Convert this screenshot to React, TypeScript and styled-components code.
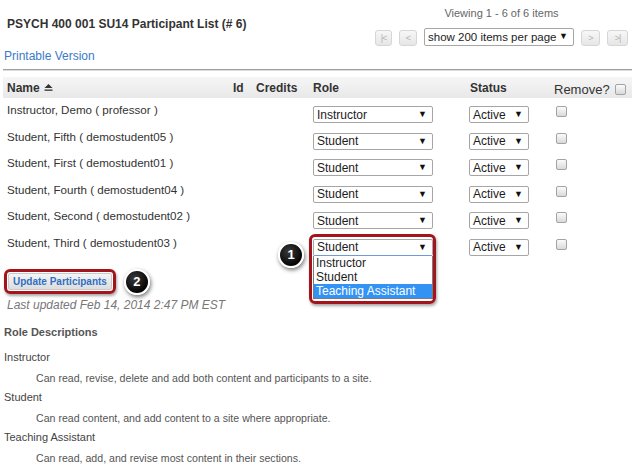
import styled, { createGlobalStyle } from "styled-components";

const GlobalStyle = createGlobalStyle`
  html, body {
    margin: 0;
    padding: 0;
    background: #fff;
  }
  body {
    font-family: "Liberation Sans", Arial, sans-serif;
    color: #333;
  }
`;

const Page = styled.div`
  width: 640px;
  height: 465px;
  overflow: hidden;
  box-sizing: border-box;
  padding: 0 8px 0 3px;
`;

const TopBar = styled.div`
  display: flex;
  justify-content: space-between;
  align-items: flex-start;
  height: 69px;
`;

const TitleBlock = styled.div`
  display: flex;
  flex-direction: column;
  padding-top: 17px;
`;

const Title = styled.h1`
  margin: 0 0 0 4px;
  font-size: 12px;
  line-height: 14px;
  font-weight: bold;
  color: #333;
`;

const PrintLink = styled.a`
  margin: 18px 0 0 1px;
  font-size: 12px;
  line-height: 14px;
  color: #3a7bc8;
  text-decoration: none;
`;

const Pager = styled.div`
  display: flex;
  flex-direction: column;
  padding-top: 7px;
  margin-right: 4px;
`;

const Viewing = styled.div`
  font-size: 11px;
  line-height: 13px;
  color: #666;
  text-align: center;
`;

const PagerControls = styled.div`
  display: flex;
  align-items: center;
  gap: 7px;
  margin-top: 7px;
`;

const PagerButton = styled.span<{ $width: number }>`
  width: ${(p) => p.$width}px;
  height: 16px;
  box-sizing: border-box;
  display: flex;
  align-items: center;
  justify-content: center;
  border: 1px solid #d6d6d6;
  border-radius: 3px;
  background: linear-gradient(#f7f7f7, #e6e6e6);
  color: #b4b4b4;
  font-size: 9px;
  letter-spacing: -1px;
  margin-top: 3px;
`;

const Dropdown = styled.div<{ $width: number; $size?: number; $tall?: boolean; $focused?: boolean }>`
  width: ${(p) => p.$width}px;
  height: ${(p) => (p.$tall ? 18 : 17)}px;
  box-sizing: border-box;
  display: flex;
  align-items: center;
  justify-content: space-between;
  padding: 0 5px 0 3px;
  border: 1px solid #a6a6a6;
  border-bottom-color: ${(p) => (p.$focused ? "#6f9ad6" : "#a6a6a6")};
  border-radius: 2px;
  background: #fff;
  font-size: ${(p) => p.$size ?? 12}px;
  color: #1c1c1c;
  white-space: nowrap;
`;

const Arrow = styled.span`
  font-size: 9px;
  color: #111;
  margin-top: -1px;
`;

const Rule = styled.div`
  height: 1px;
  background: #9f9f9f;
  box-shadow: 0 1px 0 #dedede;
`;

const Table = styled.div`
  margin-top: 7px;
`;

const COLUMNS = "226px 23px 57px 157px 84px 1fr";

const HeaderRow = styled.div`
  display: grid;
  grid-template-columns: ${COLUMNS};
  height: 21px;
  align-items: center;
  background: linear-gradient(#f6f6f6, #e8e8e8);
  font-size: 12px;
  font-weight: bold;
  color: #333;
`;

const HeaderCell = styled.div`
  display: flex;
  align-items: center;
  gap: 4px;
  padding-left: 4px;
  white-space: nowrap;
`;

const RemoveHeader = styled(HeaderCell)`
  font-weight: normal;
  font-size: 13px;
  color: #333;
  padding-top: 3px;
  gap: 5px;
`;

const Row = styled.div`
  display: grid;
  grid-template-columns: ${COLUMNS};
  height: 26.6px;
  align-items: start;
`;

const NameCell = styled.div`
  padding: 5px 0 0 4px;
  font-size: 11.6px;
  line-height: 14px;
  color: #333;
  white-space: nowrap;
`;

const Cell = styled.div<{ $left?: number }>`
  padding: 8px 0 0 ${(p) => p.$left ?? 4}px;
`;

const Checkbox = styled.input.attrs({ type: "checkbox" })`
  appearance: none;
  width: 11px;
  height: 11px;
  margin: 0;
  box-sizing: border-box;
  border: 1px solid #a3a3a3;
  border-radius: 2px;
  background: linear-gradient(#fbfbfb, #d9d9d9);
  display: block;
`;

const OpenSelect = styled.div`
  position: relative;
  width: 120px;
`;

const Listbox = styled.ul`
  position: absolute;
  top: 100%;
  left: 0;
  width: 120px;
  box-sizing: border-box;
  margin: 0;
  padding: 0;
  list-style: none;
  border: 1px solid #7b7b7b;
  border-top: none;
  background: #fff;
  font-size: 12px;
  line-height: 14px;
  color: #1c1c1c;
  z-index: 2;
`;

const Option = styled.li<{ $active?: boolean }>`
  padding-left: 2px;
  background: ${(p) => (p.$active ? "#3393f5" : "transparent")};
  color: ${(p) => (p.$active ? "#fff" : "#1c1c1c")};
`;

const Callout = styled.span`
  position: absolute;
  top: -5px;
  left: -4px;
  right: -3px;
  height: 70px;
  box-sizing: border-box;
  border: 3px solid #a3151c;
  border-radius: 6px;
  box-shadow: 1px 2px 3px rgba(0, 0, 0, 0.35);
  pointer-events: none;
  z-index: 3;
`;

const Badge = styled.span`
  width: 26px;
  height: 26px;
  box-sizing: border-box;
  border-radius: 50%;
  border: 2px solid #fff;
  background: radial-gradient(circle at 40% 35%, #3a3a3a, #050505 70%);
  box-shadow: 1px 2px 4px rgba(0, 0, 0, 0.55);
  color: #fff;
  font-size: 13px;
  font-weight: bold;
  display: flex;
  align-items: center;
  justify-content: center;
  flex-shrink: 0;
`;

const FloatingBadge = styled(Badge)`
  position: absolute;
  left: -35px;
  top: 3px;
  z-index: 3;
`;

const UpdateRow = styled.div`
  display: flex;
  align-items: center;
  gap: 8px;
  margin: 11px 0 0 1px;
`;

const UpdateFrame = styled.div`
  display: inline-flex;
  padding: 1px;
  border: 3px solid #a3151c;
  border-radius: 6px;
  box-shadow: 1px 2px 3px rgba(0, 0, 0, 0.35);
`;

const UpdateButton = styled.button`
  height: 17px;
  padding: 0 4px;
  border: 1px solid #c9c9c9;
  border-radius: 2px;
  background: linear-gradient(#f4f4f4, #dddddd);
  font-family: "Liberation Sans", Arial, sans-serif;
  font-size: 10px;
  font-weight: bold;
  color: #2f6fc3;
`;

const LastUpdated = styled.div`
  margin: 3px 0 0 4px;
  font-size: 12px;
  line-height: 14px;
  font-style: italic;
  color: #777;
`;

const RoleHeading = styled.h2`
  margin: 13px 0 0 1px;
  font-size: 11px;
  line-height: 14px;
  font-weight: bold;
  color: #555;
`;

const Descriptions = styled.dl`
  margin: 0;
  font-size: 11px;
  line-height: 14px;
`;

const Term = styled.dt`
  margin: 5px 0 0 1px;
  color: #444;
  &:first-child {
    margin-top: 11px;
  }
`;

const Definition = styled.dd`
  margin: 7px 0 0 33px;
  font-size: 10.6px;
  color: #555;
`;

const FooterLine = styled.div`
  height: 1px;
  margin: 0 -2px 0 453px;
  background: #b8b8b8;
`;

function SortIcon() {
  return (
    <svg width="9" height="7" viewBox="0 0 9 7">
      <polygon points="4.5,0 8.5,4 0.5,4" fill="#333" />
      <rect x="0.5" y="5.5" width="8" height="1.3" fill="#333" />
    </svg>
  );
}

const participants = [
  { name: "Instructor, Demo ( professor )", role: "Instructor" },
  { name: "Student, Fifth ( demostudent05 )", role: "Student" },
  { name: "Student, First ( demostudent01 )", role: "Student" },
  { name: "Student, Fourth ( demostudent04 )", role: "Student" },
  { name: "Student, Second ( demostudent02 )", role: "Student" },
  { name: "Student, Third ( demostudent03 )", role: "Student", open: true },
];

const roles = [
  {
    title: "Instructor",
    text: "Can read, revise, delete and add both content and participants to a site.",
  },
  {
    title: "Student",
    text: "Can read content, and add content to a site where appropriate.",
  },
  {
    title: "Teaching Assistant",
    text: "Can read, add, and revise most content in their sections.",
  },
];

export default function App() {
  return (
    <>
      <GlobalStyle />
      <Page>
        <TopBar>
          <TitleBlock>
            <Title>PSYCH 400 001 SU14 Participant List (# 6)</Title>
            <PrintLink href="#">Printable Version</PrintLink>
          </TitleBlock>
          <Pager>
            <Viewing>Viewing 1 - 6 of 6 items</Viewing>
            <PagerControls>
              <PagerButton $width={17}>|&lt;</PagerButton>
              <PagerButton $width={18}>&lt;</PagerButton>
              <Dropdown $width={150} $size={11.5} $tall>
                show 200 items per page <Arrow>▼</Arrow>
              </Dropdown>
              <PagerButton $width={19}>&gt;</PagerButton>
              <PagerButton $width={21}>&gt;|</PagerButton>
            </PagerControls>
          </Pager>
        </TopBar>
        <Rule />

        <Table>
          <HeaderRow>
            <HeaderCell>
              Name <SortIcon />
            </HeaderCell>
            <HeaderCell>Id</HeaderCell>
            <HeaderCell>Credits</HeaderCell>
            <HeaderCell>Role</HeaderCell>
            <HeaderCell>Status</HeaderCell>
            <RemoveHeader>
              Remove? <Checkbox />
            </RemoveHeader>
          </HeaderRow>
          {participants.map((p) => (
            <Row key={p.name}>
              <NameCell>{p.name}</NameCell>
              <div />
              <div />
              <Cell>
                {p.open ? (
                  <OpenSelect>
                    <Dropdown $width={120} $focused>
                      {p.role} <Arrow>▼</Arrow>
                    </Dropdown>
                    <Listbox>
                      <Option>Instructor</Option>
                      <Option>Student</Option>
                      <Option $active>Teaching Assistant</Option>
                    </Listbox>
                    <Callout />
                    <FloatingBadge>1</FloatingBadge>
                  </OpenSelect>
                ) : (
                  <Dropdown $width={120}>
                    {p.role} <Arrow>▼</Arrow>
                  </Dropdown>
                )}
              </Cell>
              <Cell $left={3}>
                <Dropdown $width={60}>
                  Active <Arrow>▼</Arrow>
                </Dropdown>
              </Cell>
              <Cell $left={6}>
                <Checkbox />
              </Cell>
            </Row>
          ))}
        </Table>

        <UpdateRow>
          <UpdateFrame>
            <UpdateButton>Update Participants</UpdateButton>
          </UpdateFrame>
          <Badge>2</Badge>
        </UpdateRow>
        <LastUpdated>Last updated Feb 14, 2014 2:47 PM EST</LastUpdated>

        <RoleHeading>Role Descriptions</RoleHeading>
        <Descriptions>
          {roles.map((r) => (
            <>
              <Term key={r.title}>{r.title}</Term>
              <Definition key={r.title + "-d"}>{r.text}</Definition>
            </>
          ))}
        </Descriptions>
        <FooterLine />
      </Page>
    </>
  );
}
